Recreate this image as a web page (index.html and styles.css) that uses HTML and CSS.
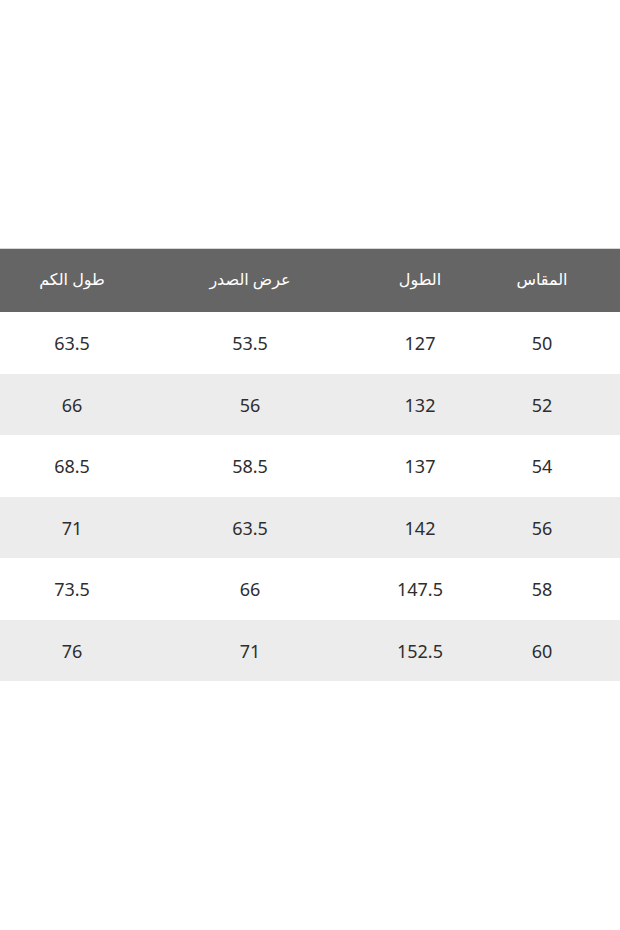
FILE: index.html
```html
<!DOCTYPE html>
<html lang="ar" dir="rtl">
<head>
<meta charset="utf-8">
<link rel="stylesheet" href="styles.css">
</head>
<body>
<div class="page">
  <div class="table">
    <div class="row head">
      <div class="cell">المقاس</div>
      <div class="cell">الطول</div>
      <div class="cell">عرض الصدر</div>
      <div class="cell">طول الكم</div>
    </div>
    <div class="row">
      <div class="cell">50</div><div class="cell">127</div><div class="cell">53.5</div><div class="cell">63.5</div>
    </div>
    <div class="row alt">
      <div class="cell">52</div><div class="cell">132</div><div class="cell">56</div><div class="cell">66</div>
    </div>
    <div class="row">
      <div class="cell">54</div><div class="cell">137</div><div class="cell">58.5</div><div class="cell">68.5</div>
    </div>
    <div class="row alt">
      <div class="cell">56</div><div class="cell">142</div><div class="cell">63.5</div><div class="cell">71</div>
    </div>
    <div class="row">
      <div class="cell">58</div><div class="cell">147.5</div><div class="cell">66</div><div class="cell">73.5</div>
    </div>
    <div class="row alt">
      <div class="cell">60</div><div class="cell">152.5</div><div class="cell">71</div><div class="cell">76</div>
    </div>
  </div>
</div>
</body>
</html>
```
FILE: styles.css
```css
html, body {
  margin: 0;
  padding: 0;
  background: #ffffff;
}
.page {
  width: 620px;
  height: 930px;
  padding-top: 248px;
  box-sizing: border-box;
  font-family: "Noto Sans", "DejaVu Sans", sans-serif;
}
.table {
  display: flex;
  flex-direction: column;
}
.row {
  display: grid;
  grid-template-columns: 116px 128px 212px 144px;
  padding-right: 20px;
  height: 62px;
  align-items: center;
  background: #ffffff;
  color: #2e2e2e;
  font-size: 18px;
}
.row.alt {
  background: #ececec;
  height: 61px;
}
.row.head {
  height: 64px;
  background: #656565;
  color: #ffffff;
  font-size: 16px;
  font-weight: normal;
  border-top: 1px solid #d6d6d6;
  box-sizing: border-box;
}
.cell {
  text-align: center;
}
.head .cell {
  padding-bottom: 4px;
}
```
